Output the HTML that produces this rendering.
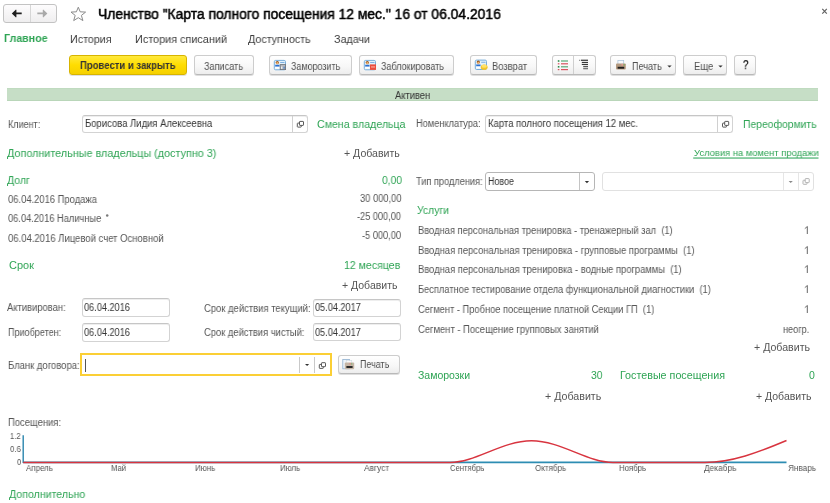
<!DOCTYPE html>
<html><head><meta charset="utf-8">
<style>
html,body{margin:0;padding:0;background:#fff;}
body{width:830px;height:503px;position:relative;overflow:hidden;font-family:"Liberation Sans",sans-serif;}
.t{will-change:transform;position:absolute;white-space:nowrap;line-height:normal;transform-origin:0 0;font-family:"Liberation Sans",sans-serif;}
.a{position:absolute;box-sizing:border-box;}
.btn{position:absolute;box-sizing:border-box;border:1px solid #cdcdcd;border-bottom-color:#b9b9b9;border-radius:3px;background:linear-gradient(#ffffff,#f7f7f7 60%,#ededed);box-shadow:0 1px 0 rgba(0,0,0,.13);}
.inp{position:absolute;box-sizing:border-box;border:1px solid #d3d3d3;border-top-color:#c6c6c6;border-radius:3px;background:#fff;box-shadow:inset 0 1px 0 #eeeeee;}
.vd{position:absolute;width:1px;background:#d0d0d0;}
svg{position:absolute;overflow:visible;}
</style></head><body>

<!-- nav -->
<div class="a" style="left:3px;top:4px;width:54px;height:19px;border:1px solid #c3c3c3;border-radius:3px;background:linear-gradient(#fdfcfd,#efeeef);"></div>
<div class="vd" style="left:30px;top:5px;height:17px;background:#d6d6d6"></div>
<svg style="left:0;top:0" width="60" height="28">
  <path d="M11.8,13.4 L16,9.4 L16.4,9.9 L16.4,12.5 L21.7,12.5 L21.7,14.3 L16.4,14.3 L16.4,16.9 L16,17.4 Z" fill="#1e1e1e"/>
  <path d="M47.4,13.4 L43.2,9.4 L42.8,9.9 L42.8,12.5 L37.3,12.5 L37.3,14.3 L42.8,14.3 L42.8,16.9 L43.2,17.4 Z" fill="#a9a9a9"/>
</svg>
<svg style="left:0;top:0" width="100" height="28">
  <path d="M78.3,7.2 L80.2,11.8 L85.6,12.1 L81.4,15.4 L82.9,20.6 L78.3,17.7 L73.7,20.6 L75.2,15.4 L71,12.1 L76.4,11.8 Z" fill="none" stroke="#8c8c8c" stroke-width="1" stroke-linejoin="miter"/>
</svg>
<svg style="left:0;top:0" width="830" height="28">
  <path d="M822.3,8.8 L826.8,13.7 M826.8,8.8 L822.3,13.7" stroke="#606060" stroke-width="1.15"/>
</svg>

<!-- toolbar -->
<div class="a" style="left:69px;top:55px;width:118px;height:20px;border:1px solid #d7b400;border-radius:3px;background:linear-gradient(#ffe93d,#ffdd00 50%,#f5d000);box-shadow:0 1px 0 rgba(0,0,0,.12);"></div>
<div class="btn" style="left:194px;top:55px;width:60px;height:20px;"></div>
<div class="btn" style="left:269px;top:55px;width:83px;height:20px;"></div>
<div class="btn" style="left:359px;top:55px;width:95px;height:20px;"></div>
<div class="btn" style="left:470px;top:55px;width:67px;height:20px;"></div>
<div class="btn" style="left:552px;top:55px;width:44px;height:20px;"></div>
<div class="vd" style="left:573px;top:56px;height:18px;background:#cfcfcf"></div>
<div class="btn" style="left:610px;top:55px;width:66px;height:20px;"></div>
<div class="btn" style="left:683px;top:55px;width:44px;height:20px;"></div>
<div class="btn" style="left:734px;top:55px;width:22px;height:20px;"></div>
<!-- toolbar icons -->
<svg style="left:0;top:0" width="830" height="80">
  <defs>
    <g id="card">
      <rect x="0.5" y="0.5" width="11.2" height="9.4" rx="1.3" fill="#e2f1fc" stroke="#78aedb" stroke-width="1"/>
      <ellipse cx="3.5" cy="2.5" rx="1.6" ry="1.5" fill="#9c5a1c"/>
      <ellipse cx="3.5" cy="3.4" rx="1" ry="1.2" fill="#eeb070"/>
      <rect x="1.4" y="4.9" width="4.3" height="1.8" fill="#2b6fd0"/>
      <rect x="1.4" y="7" width="4.3" height="1.8" fill="#ffffff"/>
      <rect x="6.4" y="2.2" width="4.3" height="0.9" fill="#74a9dc"/>
    </g>
  </defs>
  <use href="#card" x="273.8" y="59.9"/>
  <rect x="280.2" y="64.6" width="5.4" height="5" fill="#b4b8be" stroke="#6c7076" stroke-width="0.8"/>
  <rect x="281.2" y="66.6" width="1" height="2.2" fill="#ffffff"/><rect x="283.6" y="66.6" width="1" height="2.2" fill="#3a78c8"/>
  <use href="#card" x="363.8" y="59.9"/>
  <rect x="370" y="64.4" width="6" height="5.5" fill="#ec4d3d"/>
  <rect x="371" y="66.4" width="4" height="1.1" fill="#f8b0a6"/>
  <use href="#card" x="474.8" y="59.6"/>
  <ellipse cx="484.2" cy="67.2" rx="3.4" ry="2.8" fill="#f2c52a"/>
  <ellipse cx="484.2" cy="66.2" rx="2.6" ry="1.6" fill="#ffe26a"/>
  <!-- list icon -->
  <rect x="557.8" y="60.2" width="1.6" height="1.6" fill="#2a8a4a"/>
  <rect x="561" y="60.4" width="7" height="1.2" fill="#5aa878"/>
  <rect x="557.8" y="63.2" width="1.6" height="1.2" fill="#d9535f"/>
  <rect x="561" y="63.2" width="7" height="1.2" fill="#d9535f"/>
  <rect x="557.8" y="66" width="1.6" height="1.6" fill="#2a8a4a"/>
  <rect x="561" y="66.2" width="7" height="1.2" fill="#5aa878"/>
  <rect x="557.8" y="69" width="1.6" height="1.2" fill="#d9535f"/>
  <rect x="561" y="69" width="7" height="1.2" fill="#d9535f"/>
  <!-- tree icon -->
  <rect x="579.3" y="59.8" width="0.9" height="0.9" fill="#333"/>
  <rect x="581" y="59.7" width="7" height="1.1" fill="#222"/>
  <rect x="581.8" y="61.9" width="6.2" height="1" fill="#222"/>
  <rect x="581.8" y="63.9" width="6.2" height="1" fill="#222"/>
  <rect x="583.2" y="65.9" width="4.8" height="1" fill="#444"/>
  <rect x="583.2" y="67.7" width="4.8" height="1.6" fill="#777"/>
  <!-- printer -->
  <rect x="617.9" y="60.4" width="5.8" height="4.2" fill="#f6f9fc" stroke="#a9c1d8" stroke-width="0.7"/>
  <path d="M616,64.2 Q616,63.4 617,63.4 L624.8,63.4 Q625.8,63.4 625.8,64.2 L625.8,68.6 Q625.8,69.6 624.8,69.6 L617,69.6 Q616,69.6 616,68.6 Z" fill="#b49a80"/>
  <rect x="617.6" y="66.8" width="6.6" height="1.9" fill="#1e1e1e"/>
  <rect x="621.4" y="64.2" width="1.9" height="1.3" fill="#f39a9a"/>
  <rect x="623.5" y="64.2" width="1.1" height="1.3" fill="#66bb55"/>
  <!-- dropdown arrows -->
  <path d="M667.3,65.4 L671.7,65.4 L669.5,67.6 Z" fill="#333"/>
  <path d="M718.3,65.4 L722.7,65.4 L720.5,67.6 Z" fill="#333"/>
</svg>

<!-- status bar -->
<div class="a" style="left:7px;top:88px;width:811px;height:13px;background:#c6dec6;border-top:1px solid #c0dbc0;border-bottom:1px solid #b9d6b9;"></div>

<!-- client -->
<div class="inp" style="left:82px;top:115px;width:226px;height:18px;"></div>
<div class="vd" style="left:292px;top:116px;height:16px;"></div>
<div class="inp" style="left:485px;top:115px;width:248px;height:18px;"></div>
<div class="vd" style="left:717px;top:116px;height:16px;"></div>
<!-- type -->
<div class="inp" style="left:485px;top:172px;width:110px;height:19px;border-color:#b6b6b6;box-shadow:none"></div>
<div class="vd" style="left:578.5px;top:173px;height:17px;width:1.5px;background:#c4c4c4"></div>
<div class="inp" style="left:602px;top:172px;width:212px;height:19px;border-color:#e1e1e1;box-shadow:none"></div>
<div class="vd" style="left:783px;top:173px;height:17px;background:#e6e6e6"></div>
<div class="vd" style="left:798px;top:173px;height:17px;background:#e6e6e6"></div>
<!-- dates -->
<div class="inp" style="left:82px;top:298px;width:88px;height:19px;"></div>
<div class="inp" style="left:82px;top:323px;width:88px;height:19px;"></div>
<div class="inp" style="left:313px;top:299px;width:88px;height:18px;"></div>
<div class="inp" style="left:313px;top:323px;width:88px;height:18px;"></div>
<!-- blank -->
<div class="a" style="left:80px;top:353px;width:252px;height:23px;border:2px solid #fbcf35;background:#fff;"></div>
<div class="vd" style="left:299px;top:357px;height:16px;background:#c9c9c9"></div>
<div class="vd" style="left:314px;top:357px;height:16px;background:#c9c9c9"></div>
<div class="a" style="left:84.5px;top:359px;width:1.2px;height:13px;background:#555"></div>
<div class="btn" style="left:338px;top:355px;width:62px;height:19px;"></div>

<svg style="left:0;top:0" width="830" height="503">
  <defs>
    <g id="open">
      <rect x="0.5" y="2.2" width="4" height="4" rx="0.5" fill="#fff" stroke="#585858" stroke-width="1"/>
      <rect x="2.7" y="0.5" width="4" height="4" rx="0.5" fill="#fff" stroke="#585858" stroke-width="1"/>
    </g>
  </defs>
  <use href="#open" x="296.8" y="120.9"/>
  <use href="#open" x="722" y="120.9"/>
  <g opacity="0.45"><use href="#open" x="802.5" y="178.1"/></g>
  <use href="#open" x="318.8" y="362.2"/>
  <path d="M584.8,180.9 L589.1,180.9 L586.95,183.2 Z" fill="#333"/>
  <path d="M788.6,180.9 L792.8,180.9 L790.7,183 Z" fill="#8a8a8a"/>
  <path d="M305,363.9 L309.2,363.9 L307.1,366.1 Z" fill="#333"/>
  <!-- print btn icon -->
  <rect x="342.8" y="359.4" width="6.6" height="9.4" fill="#eef4fa" stroke="#8fb0d0" stroke-width="0.8"/>
  <rect x="346.2" y="360.4" width="5.6" height="3" fill="#fafafa" stroke="#c8d4de" stroke-width="0.5"/>
  <path d="M344.8,363.6 Q344.8,362.6 345.8,362.6 L353.2,362.6 Q354.2,362.6 354.2,363.6 L354.2,368 Q354.2,369.2 353,369.2 L346,369.2 Q344.8,369.2 344.8,368 Z" fill="#c5b6a6"/>
  <rect x="346.4" y="366" width="6.2" height="2" fill="#2a2a2a"/>
  <rect x="349.4" y="363.4" width="1.4" height="1" fill="#f07878"/>
  <rect x="351.2" y="363.4" width="1" height="1" fill="#5cb85c"/>
  <!-- ones -->
  <path d="M807.3,226.4 L807.3,234" stroke="#666" stroke-width="1"/><path d="M807.3,226.6 L804.8,228.6" stroke="#666" stroke-width="0.9"/>
  <path d="M807.3,246.4 L807.3,254" stroke="#666" stroke-width="1"/><path d="M807.3,246.6 L804.8,248.6" stroke="#666" stroke-width="0.9"/>
  <path d="M807.3,265.4 L807.3,273" stroke="#666" stroke-width="1"/><path d="M807.3,265.6 L804.8,267.6" stroke="#666" stroke-width="0.9"/>
  <path d="M807.3,285.4 L807.3,293" stroke="#666" stroke-width="1"/><path d="M807.3,285.6 L804.8,287.6" stroke="#666" stroke-width="0.9"/>
  <path d="M807.3,305.4 L807.3,313" stroke="#666" stroke-width="1"/><path d="M807.3,305.6 L804.8,307.6" stroke="#666" stroke-width="0.9"/>
  <circle cx="107.2" cy="215.6" r="1.25" fill="#7a7a7a"/>
  <!-- underline -->
  <rect x="693.2" y="157.3" width="125.3" height="1.5" fill="#6cc08a"/>
</svg>

<!-- chart -->
<svg style="left:0;top:0" width="830" height="503">
  <line x1="23.2" y1="435.3" x2="23.2" y2="463" stroke="#2a85ad" stroke-width="1.4"/>
  <line x1="23.2" y1="462.4" x2="786.5" y2="462.4" stroke="#2d8db3" stroke-width="1.6"/>
  <path d="M23.2,462.4 L450,462.4 C476,462.4 502,440.8 531.5,440.8 C561,440.8 587,462.4 613,462.4 L705,462.4 C732,462.4 758,452.5 786.5,440.5" fill="none" stroke="#d8343f" stroke-width="1.5"/>
</svg>

<div class="t" style="left:98.01px;top:6px;font-size:14px;color:#000;transform:scaleX(0.9892);-webkit-text-stroke:0.5px #000;">Членство "Карта полного посещения 12 мес." 16 от 06.04.2016</div>
<div class="t" style="left:4.30px;top:32px;font-size:11px;color:#2ea454;font-weight:bold;transform:scaleX(0.9662);">Главное</div>
<div class="t" style="left:70.40px;top:33px;font-size:11px;color:#3c3c3c;transform:scaleX(0.9742);">История</div>
<div class="t" style="left:134.80px;top:33px;font-size:11px;color:#3c3c3c;transform:scaleX(0.9855);">История списаний</div>
<div class="t" style="left:248.40px;top:33px;font-size:11px;color:#3c3c3c;transform:scaleX(0.9746);">Доступность</div>
<div class="t" style="left:334.10px;top:33px;font-size:11px;color:#3c3c3c;transform:scaleX(0.9759);">Задачи</div>
<div class="t" style="left:79.90px;top:59px;font-size:10.5px;color:#333;font-weight:bold;transform:scaleX(0.9082);">Провести и закрыть</div>
<div class="t" style="left:204.00px;top:60px;font-size:10.5px;color:#505050;transform:scaleX(0.8700);">Записать</div>
<div class="t" style="left:291.10px;top:60px;font-size:10.5px;color:#505050;transform:scaleX(0.8526);">Заморозить</div>
<div class="t" style="left:380.80px;top:60px;font-size:10.5px;color:#505050;transform:scaleX(0.8588);">Заблокировать</div>
<div class="t" style="left:491.60px;top:60px;font-size:10.5px;color:#505050;transform:scaleX(0.8922);">Возврат</div>
<div class="t" style="left:631.80px;top:60px;font-size:10.5px;color:#505050;transform:scaleX(0.8647);">Печать</div>
<div class="t" style="left:693.80px;top:60px;font-size:10.5px;color:#505050;transform:scaleX(0.9059);">Еще</div>
<div class="t" style="left:742.70px;top:58px;font-size:12px;color:#222;transform:scaleX(0.8143);-webkit-text-stroke:0.25px #222;">?</div>
<div class="t" style="left:395.30px;top:90px;font-size:10px;color:#333;transform:scaleX(0.9357);">Активен</div>
<div class="t" style="left:7.50px;top:119px;font-size:10px;color:#555555;transform:scaleX(0.9023);">Клиент:</div>
<div class="t" style="left:84.60px;top:118px;font-size:10px;color:#333;transform:scaleX(0.9476);">Борисова Лидия Алексеевна</div>
<div class="t" style="left:317.30px;top:118px;font-size:11px;color:#2ea454;transform:scaleX(0.9652);">Смена владельца</div>
<div class="t" style="left:415.80px;top:118px;font-size:10px;color:#555555;transform:scaleX(0.9246);">Номенклатура:</div>
<div class="t" style="left:488.10px;top:118px;font-size:10px;color:#333;transform:scaleX(0.9513);">Карта полного посещения 12 мес.</div>
<div class="t" style="left:742.50px;top:118px;font-size:11px;color:#2ea454;transform:scaleX(0.9412);">Переоформить</div>
<div class="t" style="left:7.20px;top:147px;font-size:11px;color:#2ea454;transform:scaleX(0.9820);">Дополнительные владельцы (доступно 3)</div>
<div class="t" style="left:344.10px;top:147px;font-size:10.5px;color:#555555;transform:scaleX(1.0075);">+ Добавить</div>
<div class="t" style="left:694.00px;top:147px;font-size:9.5px;color:#2ea454;transform:scaleX(0.9878);">Условия на момент продажи</div>
<div class="t" style="left:7.30px;top:174px;font-size:11px;color:#2ea454;transform:scaleX(0.9595);">Долг</div>
<div class="t" style="left:381.70px;top:174px;font-size:11px;color:#2ea454;transform:scaleX(0.9346);">0,00</div>
<div class="t" style="left:8.20px;top:194px;font-size:10px;color:#555555;transform:scaleX(0.9400);">06.04.2016 Продажа</div>
<div class="t" style="left:359.70px;top:193px;font-size:10px;color:#555555;transform:scaleX(0.9326);">30 000,00</div>
<div class="t" style="left:8.20px;top:213px;font-size:10px;color:#555555;transform:scaleX(0.9282);">06.04.2016 Наличные</div>
<div class="t" style="left:357.30px;top:211px;font-size:10px;color:#555555;transform:scaleX(0.9180);">-25 000,00</div>
<div class="t" style="left:8.20px;top:233px;font-size:10px;color:#555555;transform:scaleX(0.9502);">06.04.2016 Лицевой счет Основной</div>
<div class="t" style="left:362.20px;top:230px;font-size:10px;color:#555555;transform:scaleX(0.9228);">-5 000,00</div>
<div class="t" style="left:416.10px;top:176px;font-size:10px;color:#555555;transform:scaleX(0.9214);">Тип продления:</div>
<div class="t" style="left:488.00px;top:176px;font-size:10px;color:#333;transform:scaleX(0.8936);">Новое</div>
<div class="t" style="left:416.50px;top:204px;font-size:11px;color:#2ea454;transform:scaleX(0.9441);">Услуги</div>
<div class="t" style="left:417.80px;top:225px;font-size:10px;color:#555555;transform:scaleX(0.9341);white-space:pre">Вводная персональная тренировка - тренажерный зал  (1)</div>
<div class="t" style="left:417.80px;top:245px;font-size:10px;color:#555555;transform:scaleX(0.9390);white-space:pre">Вводная персональная тренировка - групповые программы  (1)</div>
<div class="t" style="left:417.80px;top:264px;font-size:10px;color:#555555;transform:scaleX(0.9395);white-space:pre">Вводная персональная тренировка - водные программы  (1)</div>
<div class="t" style="left:417.80px;top:284px;font-size:10px;color:#555555;transform:scaleX(0.9291);white-space:pre">Бесплатное тестирование отдела функциональной диагностики  (1)</div>
<div class="t" style="left:417.80px;top:304px;font-size:10px;color:#555555;transform:scaleX(0.9310);white-space:pre">Сегмент - Пробное посещение платной Секции ГП  (1)</div>
<div class="t" style="left:417.80px;top:324px;font-size:10px;color:#555555;transform:scaleX(0.9425);white-space:pre">Сегмент - Посещение групповых занятий</div>
<div class="t" style="left:783.00px;top:324px;font-size:10px;color:#555555;transform:scaleX(0.9155);">неогр.</div>
<div class="t" style="left:754.00px;top:341px;font-size:10.5px;color:#555555;transform:scaleX(1.0110);">+ Добавить</div>
<div class="t" style="left:8.70px;top:259px;font-size:11px;color:#2ea454;transform:scaleX(0.9929);">Срок</div>
<div class="t" style="left:343.60px;top:259px;font-size:11px;color:#2ea454;transform:scaleX(0.9604);">12 месяцев</div>
<div class="t" style="left:342.10px;top:279px;font-size:10.5px;color:#555555;">+ Добавить</div>
<div class="t" style="left:7.30px;top:302px;font-size:10px;color:#555555;transform:scaleX(0.9395);">Активирован:</div>
<div class="t" style="left:84.40px;top:302px;font-size:10px;color:#333;transform:scaleX(0.9171);">06.04.2016</div>
<div class="t" style="left:203.60px;top:303px;font-size:10px;color:#555555;transform:scaleX(0.9441);">Срок действия текущий:</div>
<div class="t" style="left:315.00px;top:302px;font-size:10px;color:#333;transform:scaleX(0.9151);">05.04.2017</div>
<div class="t" style="left:7.70px;top:327px;font-size:10px;color:#555555;transform:scaleX(0.9040);">Приобретен:</div>
<div class="t" style="left:84.40px;top:327px;font-size:10px;color:#333;transform:scaleX(0.9171);">06.04.2016</div>
<div class="t" style="left:203.60px;top:327px;font-size:10px;color:#555555;transform:scaleX(0.9379);">Срок действия чистый:</div>
<div class="t" style="left:315.00px;top:327px;font-size:10px;color:#333;transform:scaleX(0.9151);">05.04.2017</div>
<div class="t" style="left:7.70px;top:360px;font-size:10px;color:#555555;transform:scaleX(0.9480);">Бланк договора:</div>
<div class="t" style="left:359.80px;top:358px;font-size:10.5px;color:#505050;transform:scaleX(0.8504);">Печать</div>
<div class="t" style="left:417.80px;top:369px;font-size:10.5px;color:#2ea454;">Заморозки</div>
<div class="t" style="left:591.40px;top:369px;font-size:10.5px;color:#2ea454;transform:scaleX(0.9882);">30</div>
<div class="t" style="left:619.80px;top:369px;font-size:10.5px;color:#2ea454;transform:scaleX(1.0223);">Гостевые посещения</div>
<div class="t" style="left:808.50px;top:369px;font-size:10.5px;color:#2ea454;">0</div>
<div class="t" style="left:544.90px;top:390px;font-size:10.5px;color:#555555;transform:scaleX(1.0146);">+ Добавить</div>
<div class="t" style="left:755.50px;top:390px;font-size:10.5px;color:#555555;">+ Добавить</div>
<div class="t" style="left:7.80px;top:417px;font-size:10px;color:#555555;transform:scaleX(0.9422);">Посещения:</div>
<div class="t" style="left:10.20px;top:430px;font-size:9.5px;color:#555555;transform:scaleX(0.7970);">1.2</div>
<div class="t" style="left:9.90px;top:443px;font-size:9.5px;color:#555555;transform:scaleX(0.8203);">0.6</div>
<div class="t" style="left:16.50px;top:456px;font-size:9.5px;color:#555555;transform:scaleX(0.8000);">0</div>
<div class="t" style="left:25.50px;top:463px;font-size:9px;color:#555;transform:scaleX(0.8820);">Апрель</div>
<div class="t" style="left:111.00px;top:463px;font-size:9px;color:#555;transform:scaleX(0.8578);">Май</div>
<div class="t" style="left:195.40px;top:463px;font-size:9px;color:#555;transform:scaleX(0.8797);">Июнь</div>
<div class="t" style="left:280.30px;top:463px;font-size:9px;color:#555;transform:scaleX(0.8766);">Июль</div>
<div class="t" style="left:364.40px;top:463px;font-size:9px;color:#555;transform:scaleX(0.9308);">Август</div>
<div class="t" style="left:450.10px;top:463px;font-size:9px;color:#555;transform:scaleX(0.8491);">Сентябрь</div>
<div class="t" style="left:534.50px;top:463px;font-size:9px;color:#555;transform:scaleX(0.8893);">Октябрь</div>
<div class="t" style="left:619.30px;top:463px;font-size:9px;color:#555;transform:scaleX(0.8656);">Ноябрь</div>
<div class="t" style="left:704.20px;top:463px;font-size:9px;color:#555;transform:scaleX(0.9209);">Декабрь</div>
<div class="t" style="left:788.20px;top:463px;font-size:9px;color:#555;transform:scaleX(0.9050);">Январь</div>
<div class="t" style="left:8.90px;top:488px;font-size:11px;color:#2ea454;transform:scaleX(0.9639);">Дополнительно</div>
</body></html>
